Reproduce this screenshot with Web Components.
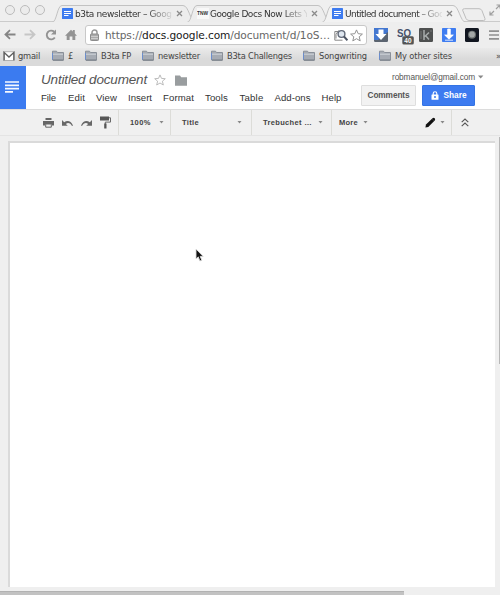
<!DOCTYPE html>
<html lang="en">
<head>
<meta charset="utf-8">
<title>Untitled document</title>
<style>
html,body{margin:0;height:100%;overflow:hidden;background:#efefef}
</style>
</head>
<body>
<docs-window></docs-window>
<script>
const define = (name, html, ready) => {
  const t = document.createElement('template');
  t.innerHTML = html;
  customElements.define(name, class extends HTMLElement {
    constructor() {
      super();
      this.attachShadow({mode: 'open'}).append(t.content.cloneNode(true));
    }
    connectedCallback() { if (ready) ready.call(this, this.shadowRoot); }
  });
};

/* A line of text whose tracking is tuned so that it spans the width in "w". */
define('fit-text', `<style>:host{display:block;white-space:pre;flex:none;overflow:visible}span{display:inline-block}</style><span><slot></slot></span>`,
function (root) {
  const w = +this.getAttribute('w');
  const s = root.querySelector('span');
  this.style.width = w + 'px';
  const n = this.textContent.length;
  const real = s.getBoundingClientRect().width;
  if (real && n) s.style.letterSpacing = ((w - real) / n).toFixed(3) + 'px';
});

const ICONS = {
  docs: [11, 11, '<rect width="11" height="11" rx=".6" fill="#3d7bf0"/><path d="M2 3.5h7M2 5.5h7M2 7.5h4.5" stroke="#fff" stroke-width="1.1"/>'],
  tnw: [12, 11, '<rect width="12" height="11" fill="#f8f8f8"/><text x="0" y="7" font-family="Liberation Sans" font-weight="700" font-size="5" textLength="11" lengthAdjust="spacingAndGlyphs" fill="#333">TNW</text>'],
  close: [7, 7, '<path d="M1 1l5 5M6 1L1 6" stroke="#8a8a8a" stroke-width="1.3"/>'],
  back: [12, 11, '<path d="M11.5 5.5H2M6 1.2L1.5 5.5 6 9.8" fill="none" stroke="#858585" stroke-width="1.8"/>'],
  forward: [12, 11, '<path d="M.5 5.5H10M6 1.2l4.5 4.3L6 9.8" fill="none" stroke="#c6c6c6" stroke-width="1.8"/>'],
  reload: [12, 12, '<path d="M9.8 8.5A4.4 4.4 0 1 1 9.2 2.8" fill="none" stroke="#939393" stroke-width="1.9"/><path d="M11 .5v5H6z" fill="#939393"/>'],
  home: [12, 12, '<path d="M0 6.7L6 .8l1.8 1.8V1h2v3.5L12 6.7h-1.7V11H7.4V7.5H4.6V11H1.7V6.7z" fill="#939393"/>'],
  lock: [9, 12, '<path d="M2 6V3.5a2.5 2.5 0 0 1 5 0V6" fill="none" stroke="#999" stroke-width="1.5"/><rect x=".5" y="5" width="8" height="6.5" rx=".8" fill="#aaa" stroke="#8c8c8c"/><path d="M1 7.5h7M1 9.5h7" stroke="#ccc"/>'],
  lens: [14, 13, '<path d="M4 2.5H.8v8.7H8.5M4.5 1.5L2 5.5v4" fill="none" stroke="#888" stroke-width="1"/><circle cx="7.5" cy="5" r="3.4" fill="#dfe7f0" stroke="#626a79" stroke-width="1.4"/><path d="M10 7.5l3.4 3.8" stroke="#4b5362" stroke-width="1.9"/>'],
  star: [13, 13, '<path d="M6.5.9l1.7 3.8 4.2.4-3.2 2.7 1 4.1-3.7-2.2-3.7 2.2 1-4.1L.6 5.1l4.2-.4z" fill="#fff" stroke="#929292"/>'],
  dropext: [14, 14, '<rect width="14" height="14" rx="1.2" fill="#5b6470"/><path d="M0 0h14v4L4 12H0z" fill="#4377d0"/><path d="M4.5 1.5h5V6h3L7 12 1.5 6h3z" fill="#fff"/>'],
  so: [17, 17, '<text x="0" y="8.5" font-family="Liberation Sans" font-weight="700" font-size="10" textLength="14" lengthAdjust="spacingAndGlyphs" fill="#46516b">SO</text><rect x="5.3" y="8.2" width="11.5" height="8.3" rx="1.5" fill="#555"/><text x="7.3" y="15" font-family="Liberation Sans" font-weight="700" font-size="6.5" fill="#fff">40</text>'],
  kext: [14, 14, '<rect width="14" height="14" rx="1.2" fill="#4e5050"/><path d="M5 2v10M10 4.5L5.5 8.7M6.5 7.5l3.5 4" stroke="#a6abab" stroke-width="1.5"/><path d="M2 3v8M12 2v2" stroke="#747777"/>'],
  downext: [14, 14, '<rect width="14" height="14" rx=".8" fill="#3f7df1"/><path d="M5.7 1h2.6v6h3L7 11.2 2.7 7h3zM3 12.2h8" fill="#fff" stroke="#fff" stroke-width=".8"/>'],
  orb: [14, 14, '<rect width="14" height="14" rx="1.5" fill="#111620"/><circle cx="7" cy="6.7" r="4" fill="#6a706f"/><circle cx="7" cy="6.5" r="2.9" fill="#a2a6a6"/>'],
  menu: [10, 10, '<path d="M0 1.2h10M0 5h10M0 8.8h10" stroke="#909090" stroke-width="1.7"/>'],
  expand: [12, 12, '<path d="M7 5l4-4M7.5 1H11v3.5M5 7l-4 4M1 7.5V11h3.5" fill="none" stroke="#a0a0a0" stroke-width="1.2"/>'],
  gmail: [12, 10, '<rect x=".5" y=".8" width="11" height="8.6" fill="#fff" stroke="#999" stroke-width=".7"/><path d="M1.2 9.3V1.5L6 6l4.8-4.5v7.8" fill="none" stroke="#5f5f5f" stroke-width="1.3"/>'],
  folder: [12, 11, '<path d="M.5 10V1.2h4l1 1.3h6V10z" fill="#a6abb3" stroke="#8a9099"/><path d="M1 4.2h10" stroke="#d1d5db"/><path d="M.5 3v6.5" stroke="#6b8dcc"/><path d="M1 10.2h10.5" stroke="#747b84"/>'],
  bigdoc: [26, 43, '<path d="M5 16h14M5 19.3h14M5 22.6h14M5 25.9h8" stroke="#f6f9ff" stroke-width="1.7"/>'],
  doclstar: [12, 12, '<path d="M6 .9l1.5 3.5 3.8.3-2.9 2.5.9 3.8L6 9l-3.3 2 .9-3.8L.7 4.7l3.8-.3z" fill="#fff" stroke="#bcbcbc"/>'],
  docfolder: [12, 11, '<path d="M0 .5h5l1.2 1.7H12v8.6H0z" fill="#999d9f"/>'],
  print: [11, 10, '<path d="M2.5 0h6v2h-6zM0 3h11v4.5H9V6H2v1.5H0z" fill="#666"/><path d="M2.7 6h5.6v3.2H2.7z" fill="#eee" stroke="#666"/>'],
  undo: [11, 8, '<path d="M0 1v5.8h5.8L3.9 4.9C6 3.3 8.6 4.2 10 7l1-.6C9 1.6 5.2.9 2.2 3.2z" fill="#686868"/>'],
  redo: [11, 8, '<path d="M11 1v5.8H5.2l1.9-1.9C5 3.3 2.4 4.2 1 7L0 6.4C2 1.6 5.8.9 8.8 3.2z" fill="#686868"/>'],
  roller: [11, 13, '<path d="M0 .5h9v4H0z" fill="#555"/><path d="M9 1.8h1.5v4.3H5.3V8" fill="none" stroke="#686868"/><path d="M4.2 7.5h2.3v5H4.2z" fill="#555"/>'],
  pencil: [11, 11, '<path d="M.4 10.6l.6-3L7.5 1.2q1.2-1 2.2 0t0 2.2L3.3 9.9z" fill="#111"/><path d="M7 2l2 2" stroke="#444" stroke-width=".6"/>'],
  chevrons: [8, 9, '<path d="M.7 4.2L4 1l3.3 3.2M.7 8.2L4 5l3.3 3.2" fill="none" stroke="#555" stroke-width="1.1"/>'],
  caret: [5, 3, '<path d="M.5 0h4L2.5 2.4z" fill="#888"/>'],
  bigcaret: [6, 4, '<path d="M0 .5h5.4L2.7 3.4z" fill="#888"/>'],
  sharelock: [8, 9, '<path d="M2.2 4V2.6a1.8 1.8 0 0 1 3.6 0V4" fill="none" stroke="#fff" stroke-width="1.1"/><rect x=".5" y="3.4" width="7" height="5.4" rx=".5" fill="#fff"/><circle cx="4" cy="6" r="1" fill="#3d7bf0"/>'],
  cursor: [9, 14, '<path d="M1 1v10l2.3-2.1L4.8 13l2-.8-1.6-3.8h3z" fill="#111" stroke="#ddd" stroke-width=".9"/>']
};
define('ui-icon', `<style>:host{display:block;flex:none}svg{display:block}</style><div></div>`, function (root) {
  const [w, h, body] = ICONS[this.getAttribute('name')];
  root.querySelector('div').innerHTML = `<svg width="${w}" height="${h}" viewBox="0 0 ${w} ${h}">${body}</svg>`;
});

define('browser-tab', `<style>
:host{display:grid;grid-template-columns:13px 101px 8px;align-items:center;width:144px;height:22px;box-sizing:border-box;padding:5px 10px 0;margin-left:-9px;flex:none;color:#333;font:9px "DejaVu Sans","Noto Sans",sans-serif}
.t{overflow:hidden;width:97px;line-height:16px;-webkit-mask-image:linear-gradient(90deg,#000 73%,transparent 103%);mask-image:linear-gradient(90deg,#000 73%,transparent 103%)}
.bg{grid-area:1/1/2/4;margin:-5px -10px 0;width:144px;height:22px}
.i{grid-area:1/1}.t{grid-area:1/2}.c{grid-area:1/3}
</style>
<svg class="bg" viewBox="0 0 144 22"><path d="M0 22.5C5 22 5 5.5 10 5.5H131C137 5.5 138 22 144 22.5" fill="#ededed" stroke="#c2c2c2"/></svg>
<div class="i"><slot name="icon"></slot></div><div class="t"><slot></slot></div><ui-icon class="c" name="close"></ui-icon>`,
function (root) {
  if (this.hasAttribute('active')) { root.querySelector('path').setAttribute('fill', '#f2f2f2'); this.style.zIndex = 1; }
});

define('tab-strip', `<style>
:host{display:flex;height:22px;background:#efefef;border-bottom:1px solid #cbcbcb;box-sizing:border-box}
.dots{display:flex;gap:5px;padding:5px 0 0 5px;width:61px;box-sizing:border-box;flex:none}
.dots i{width:10px;height:10px;box-sizing:border-box;border:1px solid #bcbcbc;border-radius:50%;background:#ececec}
.new{margin:8px 0 0 -5px;flex:none}.ex{margin:4px 0 0 3px}
</style>
<div class="dots"><i></i><i></i><i></i></div>
<browser-tab><ui-icon slot="icon" name="docs"></ui-icon><fit-text w="104">b3ta newsletter – Google</fit-text></browser-tab>
<browser-tab><ui-icon slot="icon" name="tnw"></ui-icon><fit-text w="108">Google Docs Now Lets You</fit-text></browser-tab>
<browser-tab active><ui-icon slot="icon" name="docs"></ui-icon><fit-text w="104">Untitled document – Goog</fit-text></browser-tab>
<svg class="new" width="25" height="13" viewBox="0 0 25 13"><path d="M3.5.7H18q2 0 3 2l3 8q.5 1.8-1.5 1.8H8q-2 0-3-2L1.6 2.2Q1.5.7 3.5.7z" fill="#eee" stroke="#bdbdbd"/></svg>
<ui-icon class="ex" name="expand"></ui-icon>`);

define('nav-bar', `<style>
:host{display:flex;align-items:center;height:26px;background:#eee;box-sizing:border-box;padding-left:4px;flex:none}
.nav{display:grid;grid-template-columns:repeat(4,20.3px);width:81px;flex:none}
.url{display:flex;align-items:center;width:282px;height:20px;box-sizing:border-box;border:1px solid #c8c8c8;border-radius:3px;background:#fff;padding-left:4px;color:#666;font:10.6px "DejaVu Sans","Noto Sans",sans-serif;flex:none}
.url ui-icon{margin-right:6px}.url b{font-weight:400;color:#181818}
.url .l{margin:0 2px 0 4px}.url .s{margin:0}
.ext{display:grid;grid-template-columns:23px 22px 22.5px 23px 24.5px 10px;align-items:center;margin-left:7px;flex:none}
.so{margin-top:3px}
</style>
<div class="nav"><ui-icon name="back"></ui-icon><ui-icon name="forward"></ui-icon><ui-icon name="reload"></ui-icon><ui-icon name="home"></ui-icon></div>
<div class="url"><ui-icon name="lock"></ui-icon><fit-text w="225"><span>https://</span><b>docs.google.com</b>/document/d/1oS…</fit-text><ui-icon class="l" name="lens"></ui-icon><ui-icon class="s" name="star"></ui-icon></div>
<div class="ext"><ui-icon name="dropext"></ui-icon><ui-icon class="so" name="so"></ui-icon><ui-icon name="kext"></ui-icon><ui-icon name="downext"></ui-icon><ui-icon name="orb"></ui-icon><ui-icon name="menu"></ui-icon></div>`);

define('bookmark-bar', `<style>
:host{display:grid;grid-template-columns:49px 33px 57px 69px 92px 76px 117px 6px;align-items:center;height:18px;box-sizing:border-box;padding:0 0 3px 3px;background:linear-gradient(#eaeaea,#dadada 60%);color:#444;font:8.3px/14px "DejaVu Sans","Noto Sans",sans-serif;flex:none}
div{display:flex;align-items:center;gap:4px}
</style>
<div style="gap:3px"><ui-icon name="gmail"></ui-icon><fit-text w="22">gmail</fit-text></div>
<div><ui-icon name="folder"></ui-icon><fit-text w="5">£</fit-text></div>
<div><ui-icon name="folder"></ui-icon><fit-text w="30">B3ta FP</fit-text></div>
<div><ui-icon name="folder"></ui-icon><fit-text w="42">newsletter</fit-text></div>
<div><ui-icon name="folder"></ui-icon><fit-text w="65">B3ta Challenges</fit-text></div>
<div><ui-icon name="folder"></ui-icon><fit-text w="48">Songwriting</fit-text></div>
<div><ui-icon name="folder"></ui-icon><fit-text w="57">My other sites</fit-text></div>
<div>»</div>`);

define('doc-header', `<style>
:host{display:flex;height:43px;background:#fff;font-family:"Liberation Sans",Arial,sans-serif;flex:none}
.logo{width:26px;height:43px;background:#3b7bf0;flex:none}
.main{padding-left:15px;width:320px;flex:none}
.title{display:flex;align-items:center;height:26px;padding-top:1px;box-sizing:border-box;font-size:13.5px;font-style:italic;color:#555}
.title .s{margin:1px 8px 0 7px}.title .f{margin:1px 0 0 1px}
.menu{display:grid;grid-template-columns:27px 28px 32px 35px 42px 34.5px 35px 47px 22px;font-size:9.6px;line-height:12px;color:#333}
.side{flex:1;padding:5px 0 0;min-width:0}
.user{display:flex;align-items:center;gap:3px;height:11px;padding-left:31px;font-size:8.3px;color:#555}
.btns{display:flex;gap:6px;margin-top:3px}
button{all:unset;box-sizing:border-box;display:flex;align-items:center;justify-content:center;height:21px;font-size:8.3px;line-height:18px;font-weight:700;color:#555;background:#f2f2f2;border:1px solid #dedede;border-radius:1px;width:55px;padding-bottom:1px}
button.p{width:53px;background:#3d7bf0;border-color:#3373e4;color:#fff;gap:5px}
</style>
<div class="logo"><ui-icon name="bigdoc"></ui-icon></div>
<div class="main"><div class="title"><fit-text w="106">Untitled document</fit-text><ui-icon class="s" name="doclstar"></ui-icon><ui-icon class="f" name="docfolder"></ui-icon></div>
<div class="menu"><fit-text w="15">File</fit-text><fit-text w="17">Edit</fit-text><fit-text w="21">View</fit-text><fit-text w="24">Insert</fit-text><fit-text w="31">Format</fit-text><fit-text w="23">Tools</fit-text><fit-text w="24">Table</fit-text><fit-text w="36">Add-ons</fit-text><fit-text w="20">Help</fit-text></div></div>
<div class="side"><div class="user"><fit-text w="83">robmanuel@gmail.com</fit-text><ui-icon name="bigcaret"></ui-icon></div>
<div class="btns"><button><fit-text w="42">Comments</fit-text></button><button class="p"><ui-icon name="sharelock"></ui-icon><fit-text w="23">Share</fit-text></button></div></div>`);

define('doc-toolbar', `<style>
:host{display:flex;height:27px;background:#f0f0f0;border-top:1px solid #dcdcdc;border-bottom:1px solid #e4e4e4;box-sizing:border-box;font:700 7.5px "Liberation Sans",Arial,sans-serif;color:#444;flex:none}
.g{display:flex;align-items:center;justify-content:space-between;box-sizing:border-box;height:25px;border-right:1px solid #dcdcd8;flex:none}
.i{width:119px;padding:0 7px 0 43px}.z{width:52px;padding:0 6px 0 11px}.t{width:81px;padding:0 9px 0 11px}.f{width:80px;padding:0 8px 0 11px}
.m{width:120px;padding:0 6px 0 7px}.m span,.m b{display:flex;align-items:center;gap:5px}.m b{gap:4px}.c{padding-left:9px;border:0}
</style>
<div class="g i"><ui-icon name="print"></ui-icon><ui-icon name="undo"></ui-icon><ui-icon name="redo"></ui-icon><ui-icon name="roller"></ui-icon></div>
<div class="g z"><fit-text w="21">100%</fit-text><ui-icon name="caret"></ui-icon></div>
<div class="g t"><fit-text w="17">Title</fit-text><ui-icon name="caret"></ui-icon></div>
<div class="g f"><fit-text w="49">Trebuchet …</fit-text><ui-icon name="caret"></ui-icon></div>
<div class="g m"><span><fit-text w="19">More</fit-text><ui-icon name="caret"></ui-icon></span><b><ui-icon name="pencil"></ui-icon><ui-icon name="caret"></ui-icon></b></div>
<div class="g c"><ui-icon name="chevrons"></ui-icon></div>`);

define('doc-canvas', `<style>
:host{display:grid;grid-template-columns:1fr 4px 1px;grid-template-rows:1fr 4px 4px;flex:1;min-height:0;background:#efefef}
.page{margin:5px 0 0 8px;background:#fff;border:solid #dadada;border-width:2px 0 0 2px;grid-area:1/1}
.v{grid-area:1/3;margin-top:1px;height:227px;background:#b7b7b7}
.h{grid-area:3/1/4/4;width:404px;background:#c2c2c2;border-top:1px solid #b2b2b2;box-sizing:border-box}
ui-icon{position:absolute;left:195px;top:248px}
</style><div class="page"></div><div class="v"></div><div class="h"></div><ui-icon name="cursor"></ui-icon>`);

define('docs-window', `<style>:host{display:flex;flex-direction:column;width:500px;height:595px;overflow:hidden}tab-strip{flex:none}</style>
<tab-strip></tab-strip><nav-bar></nav-bar><bookmark-bar></bookmark-bar><doc-header></doc-header><doc-toolbar></doc-toolbar><doc-canvas></doc-canvas>`);
</script>
</body>
</html>
